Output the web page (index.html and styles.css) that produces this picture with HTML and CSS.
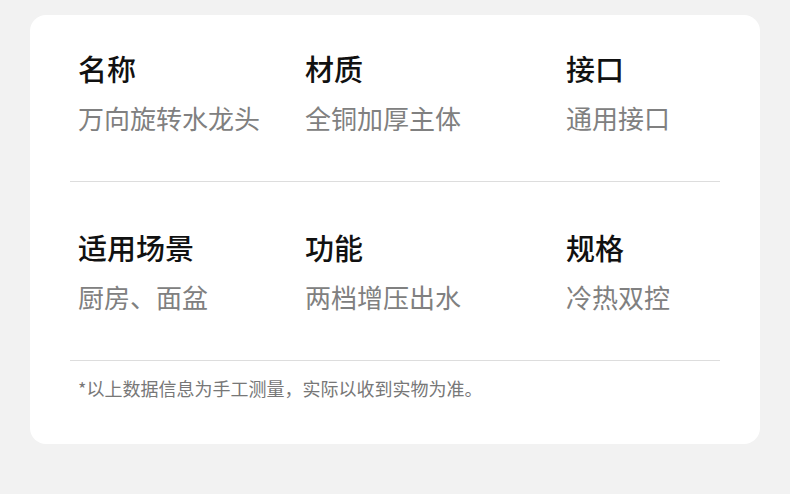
FILE: index.html
```html
<!DOCTYPE html>
<html lang="zh-CN">
<head>
  <meta charset="UTF-8">
  <meta name="viewport" content="width=device-width, initial-scale=1.0">
  <title>产品参数</title>
  <link rel="stylesheet" href="styles.css">
</head>
<body>
  <div class="card">
    <div class="specs">
      <div class="spec">
        <div class="label">名称</div>
        <div class="value">万向旋转水龙头</div>
      </div>
      <div class="spec">
        <div class="label">材质</div>
        <div class="value">全铜加厚主体</div>
      </div>
      <div class="spec">
        <div class="label">接口</div>
        <div class="value">通用接口</div>
      </div>
    </div>
    <div class="specs">
      <div class="spec">
        <div class="label">适用场景</div>
        <div class="value">厨房、面盆</div>
      </div>
      <div class="spec">
        <div class="label">功能</div>
        <div class="value">两档增压出水</div>
      </div>
      <div class="spec">
        <div class="label">规格</div>
        <div class="value">冷热双控</div>
      </div>
    </div>
    <p class="note">*以上数据信息为手工测量，实际以收到实物为准。</p>
  </div>
</body>
</html>
```

FILE: styles.css
```css
* { box-sizing: border-box; }
body {
  margin: 0;
  padding: 15px 30px 0;
  background: #f2f2f2;
  font-family: "Noto Sans CJK SC", "Noto Sans", sans-serif;
  color: #111;
}
.card {
  width: 730px;
  background: #fff;
  border-radius: 16px;
  padding: 0 40px 44px;
}
.specs {
  display: grid;
  grid-template-columns: 227px 261px 1fr;
  padding: 35px 0 46px 8px;
  border-bottom: 1px solid #ddd;
}
.specs + .specs { padding-top: 47px; }
.spec { display: flex; flex-direction: column; gap: 15px; }
.label {
  font-size: 29px;
  line-height: 36px;
  font-weight: 500;
  color: #111;
}
.value {
  font-size: 26px;
  line-height: 34px;
  color: #808080;
}
.note {
  margin: 15px 0 0 8px;
  font-size: 18px;
  line-height: 24px;
  color: #777;
}
```
